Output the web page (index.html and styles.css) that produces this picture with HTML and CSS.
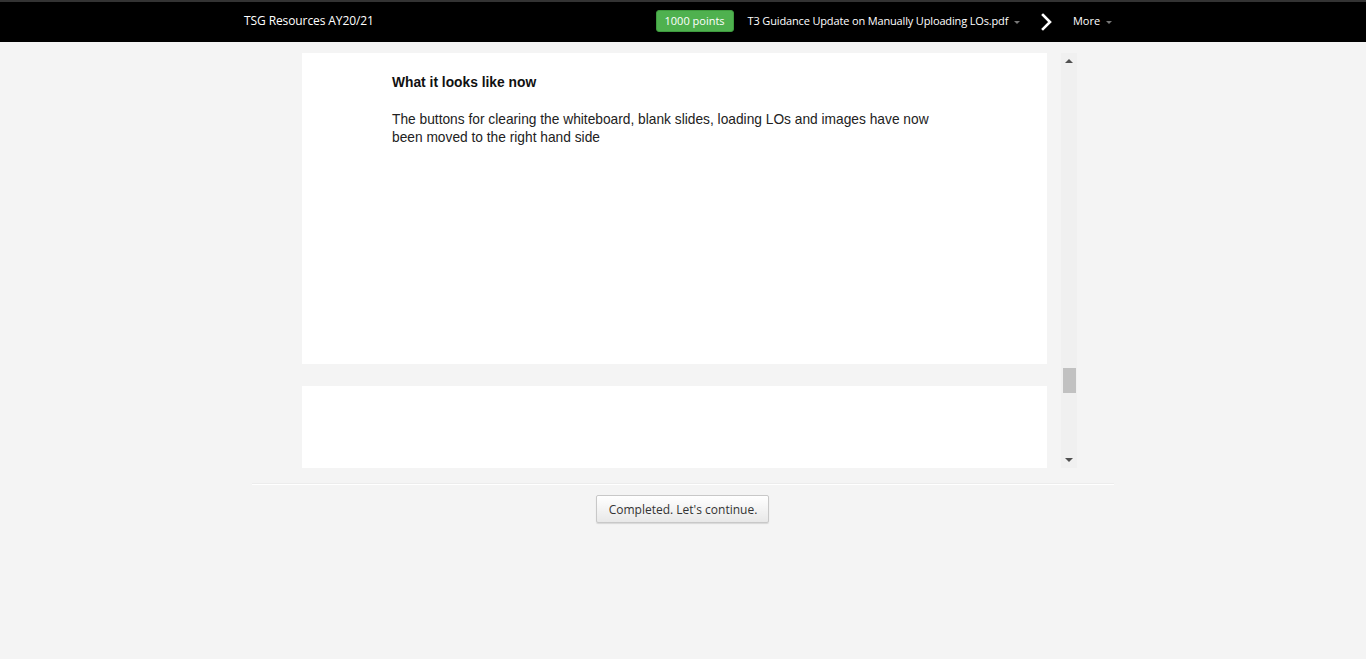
FILE: index.html
```html
<!DOCTYPE html>
<html>
<head>
<meta charset="utf-8">
<link rel="stylesheet" href="styles.css">
</head>
<body>
<header class="topbar">
  <div class="topbar-inner">
    <div class="course-title">TSG Resources AY20/21</div>
    <div class="topbar-right">
      <span class="points">1000 points</span>
      <span class="doc-title">T3 Guidance Update on Manually Uploading LOs.pdf <span class="caret"></span></span>
      <span class="next">
        <svg width="12" height="18" viewBox="0 0 12 18"><path d="M2 2 L9 9 L2 16" fill="none" stroke="#fff" stroke-width="2.6" stroke-linecap="square"/></svg>
      </span>
      <span class="more">More <span class="caret"></span></span>
    </div>
  </div>
</header>
<main class="main">
  <div class="viewer">
    <div class="pages">
      <div class="page page-one">
        <h3 class="page-heading">What it looks like now</h3>
        <p class="page-text">The buttons for clearing the whiteboard, blank slides, loading LOs and images have now been moved to the right hand side</p>
      </div>
      <div class="page page-two"></div>
    </div>
    <div class="scrollbar">
      <div class="arrow arrow-up"></div>
      <div class="track"><div class="thumb"></div></div>
      <div class="arrow arrow-down"></div>
    </div>
  </div>
  <div class="separator"></div>
  <div class="actions">
    <button class="continue-btn">Completed. Let's continue.</button>
  </div>
</main>
</body>
</html>
```

FILE: styles.css
```css
html, body {
  margin: 0;
  padding: 0;
  background: #f4f4f4;
  height: 100%;
}
body {
  font-family: "Open Sans", "Liberation Sans", sans-serif;
}
.topbar {
  background: #000;
  border-top: 2px solid #333;
  height: 40px;
}
.topbar-inner {
  display: flex;
  align-items: center;
  justify-content: space-between;
  height: 40px;
  margin-left: 244px;
  width: 868px;
}
.course-title {
  color: #fff;
  font-size: 12px;
  letter-spacing: -0.1px;
  margin-top: -3px;
}
.topbar-right {
  display: flex;
  align-items: center;
  color: #fff;
  font-size: 11px;
}
.points {
  background: #4fb14f;
  border: 1px solid #3e9a3e;
  border-radius: 3px;
  color: #fff;
  height: 20px;
  line-height: 20px;
  padding: 0 8px;
  margin-top: -2px;
  font-size: 11px;
}
.doc-title {
  margin-left: 14px;
  margin-top: -3px;
  letter-spacing: -0.15px;
}
.caret {
  display: inline-block;
  width: 0;
  height: 0;
  border-left: 3px solid transparent;
  border-right: 3px solid transparent;
  border-top: 3px solid #777;
  vertical-align: middle;
  margin-left: 3px;
}
.next {
  margin-left: 21px;
  display: flex;
  align-items: center;
  margin-top: 0px;
}
.more {
  margin-left: 20px;
  margin-top: -3px;
}
.main {
  padding-top: 11px;
}
.viewer {
  display: flex;
  margin-left: 302px;
  width: 775px;
  height: 415px;
  overflow: hidden;
}
.pages {
  width: 745px;
  display: flex;
  flex-direction: column;
  gap: 22px;
}
.page {
  background: #fff;
  flex-shrink: 0;
}
.page-one {
  height: 311px;
  padding: 21px 0 0 90px;
  box-sizing: border-box;
  font-family: "Liberation Sans", Arial, sans-serif;
  color: #222;
}
.page-heading {
  margin: 0;
  font-size: 13.8px;
  font-weight: bold;
  color: #111;
  line-height: 18px;
}
.page-text {
  margin: 19px 0 0 0;
  font-size: 13.75px;
  line-height: 18px;
  width: 560px;
  color: #222;
}
.page-two {
  height: 200px;
}
.scrollbar {
  margin-left: 14px;
  width: 16px;
  height: 415px;
  background: #f0f0f0;
  display: flex;
  flex-direction: column;
}
.arrow {
  height: 16px;
  display: flex;
  align-items: center;
  justify-content: center;
}
.arrow-up::before {
  content: "";
  border-left: 4px solid transparent;
  border-right: 4px solid transparent;
  border-bottom: 4px solid #505050;
}
.arrow-down::before {
  content: "";
  border-left: 4px solid transparent;
  border-right: 4px solid transparent;
  border-top: 4px solid #505050;
}
.track {
  flex: 1;
  position: relative;
}
.thumb {
  position: absolute;
  left: 2px;
  right: 1px;
  top: 299px;
  height: 25px;
  background: #c1c1c1;
}
.separator {
  margin: 15px 0 0 252px;
  width: 862px;
  height: 1px;
  background: #fff;
  border-top: 1px solid #ececec;
}
.actions {
  display: flex;
  justify-content: center;
  padding-top: 10px;
}
.continue-btn {
  font-family: "Open Sans", "Liberation Sans", sans-serif;
  font-size: 12px;
  color: #333;
  height: 28px;
  padding: 0 11px 0 12px;
  border: 1px solid #c8c8c8;
  border-radius: 2px;
  background: linear-gradient(#ffffff, #e8e8e8);
  box-shadow: 0 1px 1px rgba(0,0,0,0.12);
  margin-left: -1px;
}
```
